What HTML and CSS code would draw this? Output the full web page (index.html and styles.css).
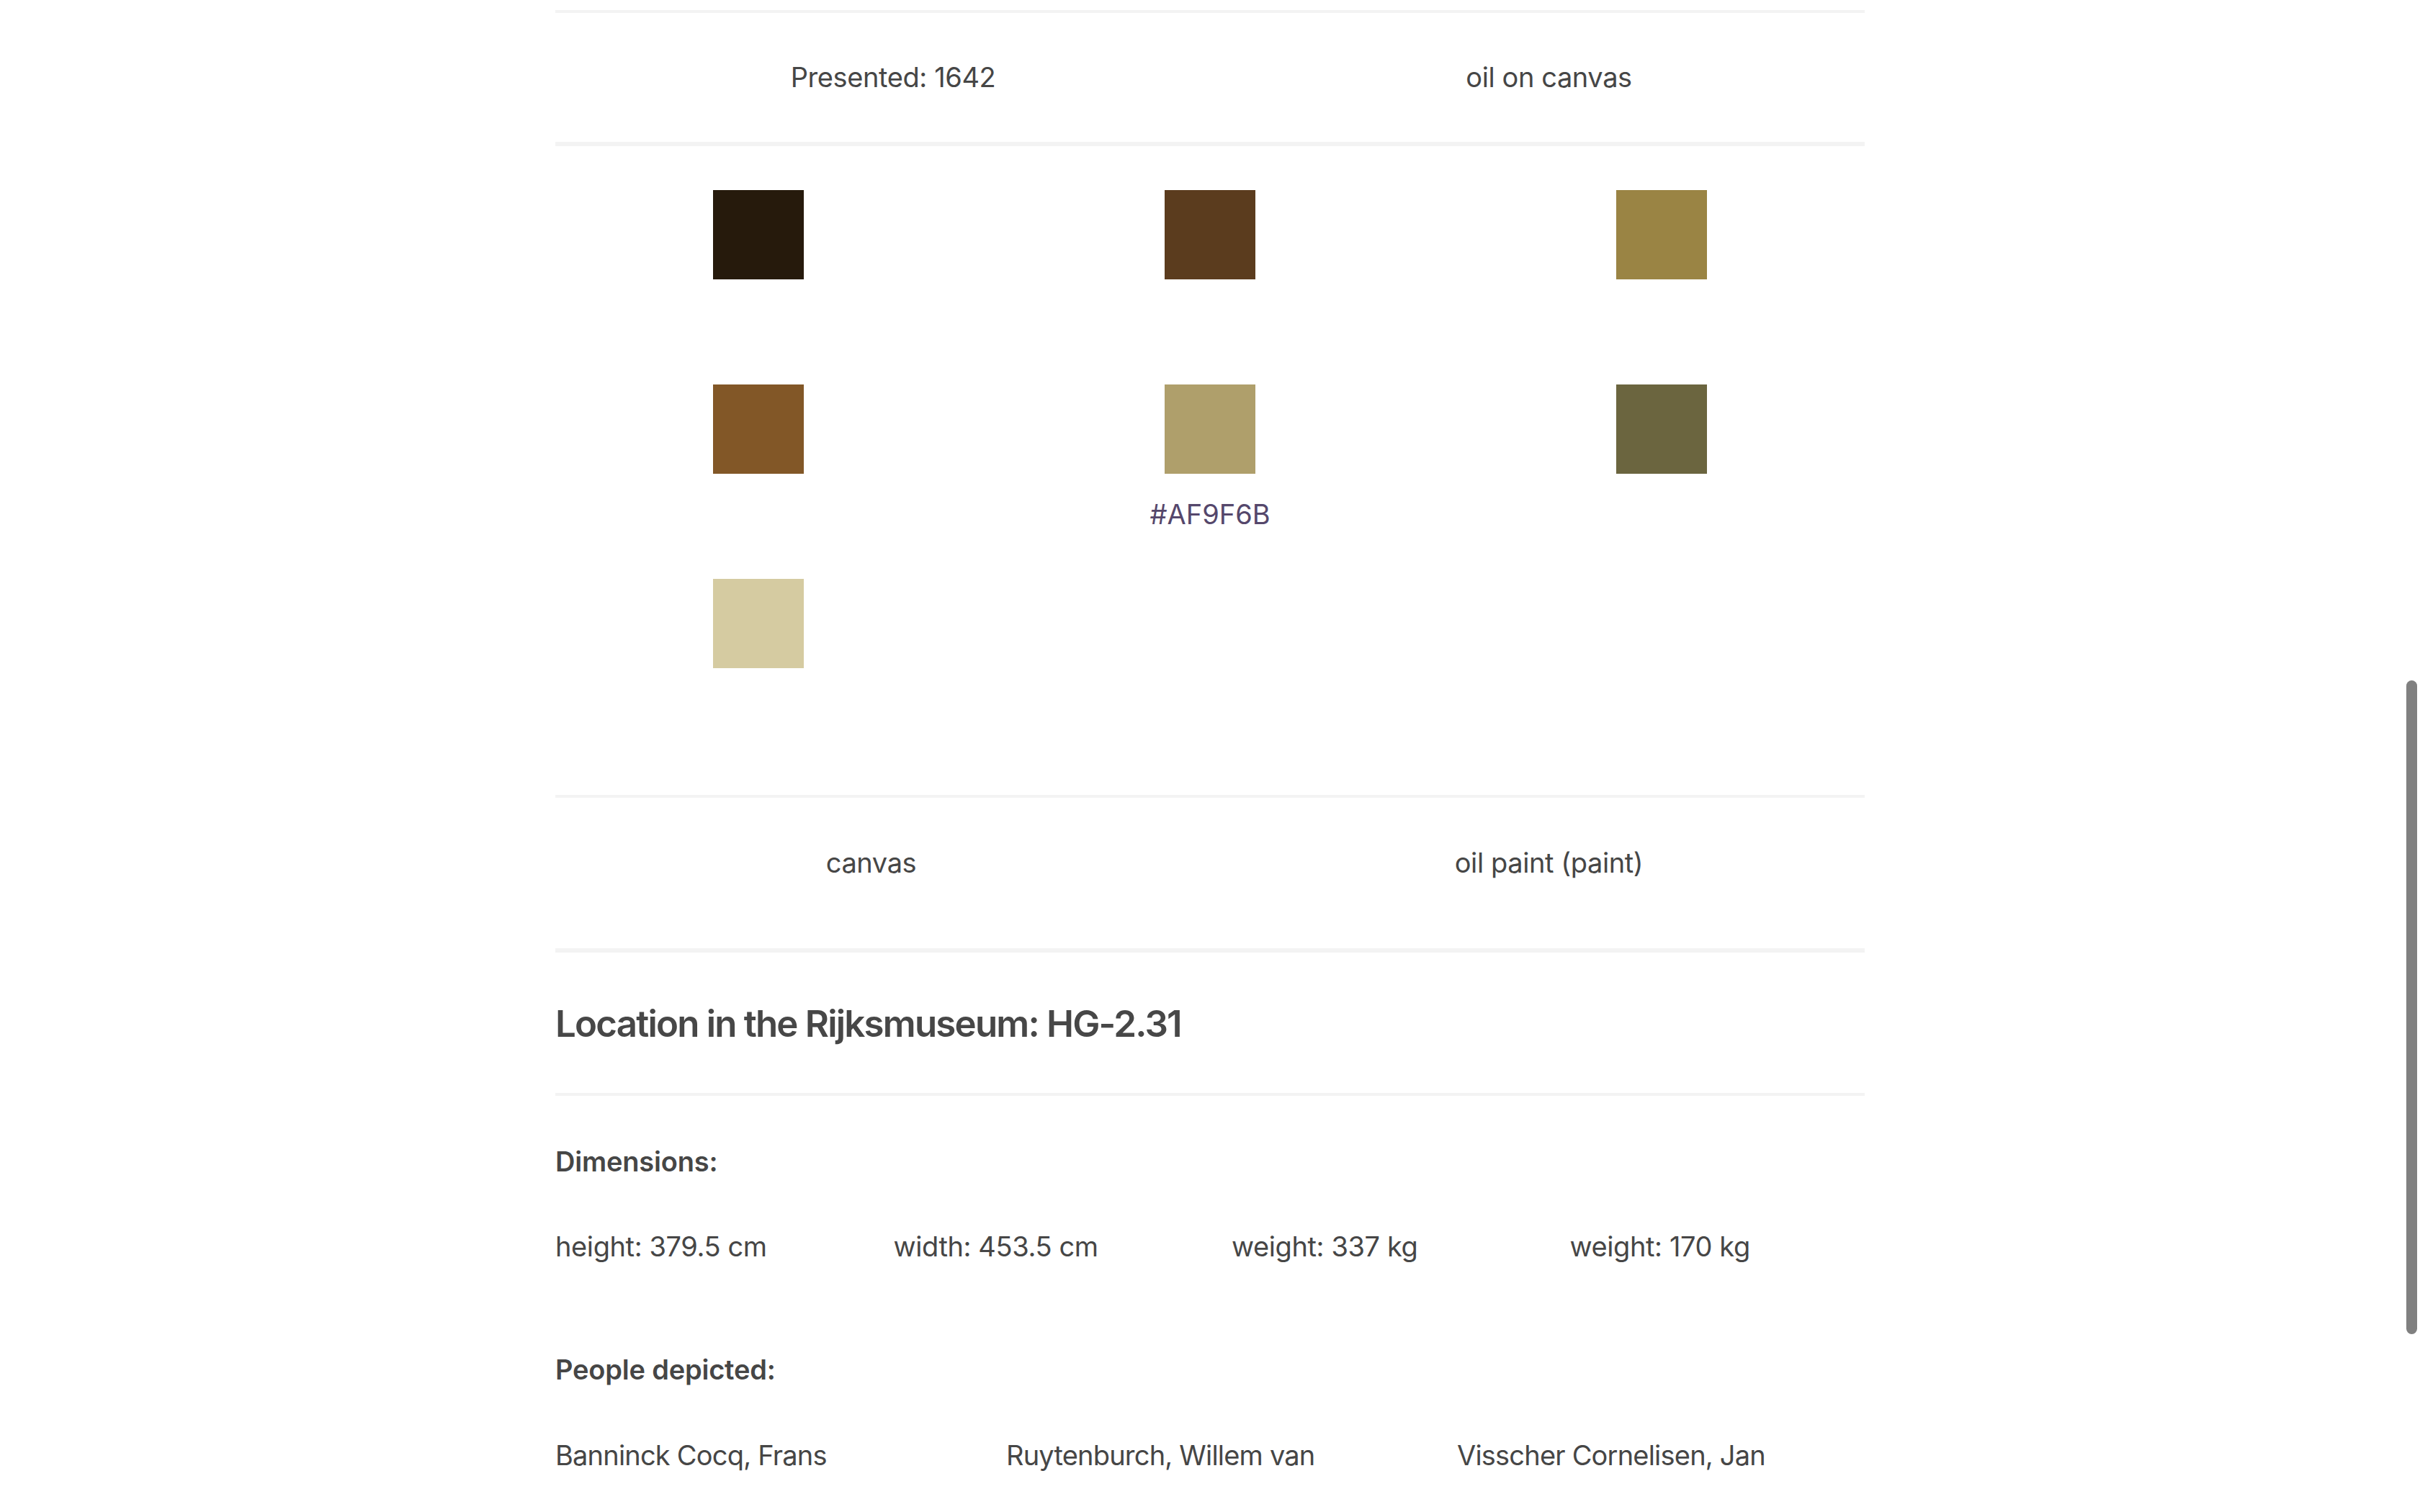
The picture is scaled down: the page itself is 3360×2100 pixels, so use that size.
FILE: index.html
```html
<!DOCTYPE html>
<html lang="en">
<head>
<meta charset="utf-8">
<title>Rijksmuseum object details</title>
<link rel="stylesheet" href="styles.css">
</head>
<body>
<main class="page">
  <div class="top-spacer"></div>

  <section class="pair-row pair-row--first">
    <div class="pair-cell pair-cell--shift">Presented: 1642</div>
    <div class="pair-cell">oil on canvas</div>
  </section>

  <section class="swatches">
    <div class="swatch-cell"><div class="swatch" style="background:#261A0C"></div><div class="hex"></div></div>
    <div class="swatch-cell"><div class="swatch" style="background:#5B3C1E"></div><div class="hex"></div></div>
    <div class="swatch-cell"><div class="swatch" style="background:#9A8444"></div><div class="hex"></div></div>
    <div class="swatch-cell"><div class="swatch" style="background:#825727"></div><div class="hex"></div></div>
    <div class="swatch-cell"><div class="swatch" style="background:#AF9F6B"></div><div class="hex">#AF9F6B</div></div>
    <div class="swatch-cell"><div class="swatch" style="background:#6B653F"></div><div class="hex"></div></div>
    <div class="swatch-cell"><div class="swatch" style="background:#D5CBA1"></div><div class="hex"></div></div>
  </section>

  <section class="pair-row pair-row--materials">
    <div class="pair-cell">canvas</div>
    <div class="pair-cell">oil paint (paint)</div>
  </section>

  <section class="location">
    <h2 class="location-title">Location in the Rijksmuseum: HG-2.31</h2>
  </section>

  <section class="details">
    <h3 class="detail-label">Dimensions:</h3>
    <div class="detail-grid detail-grid--four">
      <div class="detail-item">height: 379.5 cm</div>
      <div class="detail-item">width: 453.5 cm</div>
      <div class="detail-item">weight: 337 kg</div>
      <div class="detail-item">weight: 170 kg</div>
    </div>

    <h3 class="detail-label detail-label--people">People depicted:</h3>
    <div class="detail-grid detail-grid--three">
      <div class="detail-item detail-item--name">Banninck Cocq, Frans</div>
      <div class="detail-item detail-item--name">Ruytenburch, Willem van</div>
      <div class="detail-item detail-item--name">Visscher Cornelisen, Jan</div>
    </div>
  </section>
</main>
<div class="scroll-thumb"></div>
</body>
</html>
```

FILE: styles.css
```css
html, body {
  margin: 0;
  padding: 0;
  height: 2100px;
  overflow: hidden;
  background: #ffffff;
}

body {
  font-family: Inter, "Noto Sans", "Liberation Sans", sans-serif;
  color: #464646;
  font-size: 38px;
  line-height: 54px;
  letter-spacing: -0.4px;
}

.page {
  width: 1818px;
  margin: 0 auto;
}

.top-spacer {
  height: 14px;
}

.pair-row {
  display: grid;
  grid-template-columns: 1fr 1fr;
  column-gap: 64px;
  border-top: 4px solid #f3f3f3;
}

.pair-row--first {
  padding: 62px 0 63px;
  border-bottom: 6px solid #f3f3f3;
}

.pair-row--materials {
  padding: 63px 0 92px;
  border-bottom: 6px solid #f3f3f3;
}

.pair-cell {
  text-align: center;
}

.pair-cell--shift {
  padding-left: 61px;
}

.swatches {
  display: grid;
  grid-template-columns: repeat(3, 1fr);
  column-gap: 64px;
  row-gap: 63px;
  padding: 61px 0 93px;
}

.swatch-cell {
  display: flex;
  flex-direction: column;
  align-items: center;
}

.swatch {
  width: 126px;
  height: 124px;
}

.hex {
  margin-top: 29px;
  height: 54px;
  color: #55476b;
  text-align: center;
  letter-spacing: 0;
}

.location {
  padding: 68px 0 66px;
  border-bottom: 4px solid #f3f3f3;
}

.location-title {
  margin: 0;
  font-size: 51px;
  line-height: 61px;
  font-weight: 600;
  letter-spacing: -1.8px;
  color: #474747;
}

.details {
  padding-top: 64px;
}

.detail-label {
  margin: 0;
  font-size: 38px;
  line-height: 54px;
  font-weight: 600;
  letter-spacing: -0.2px;
}

.detail-label--people {
  margin-top: 117px;
}

.detail-grid {
  display: grid;
  column-gap: 60px;
  margin-top: 64px;
}

.detail-grid--four {
  grid-template-columns: repeat(4, 1fr);
}

.detail-grid--three {
  grid-template-columns: repeat(3, 1fr);
  margin-top: 65px;
}

.detail-item--name {
  letter-spacing: -0.8px;
}

.scroll-thumb {
  position: fixed;
  left: 3341px;
  top: 945px;
  width: 15px;
  height: 908px;
  border-radius: 8px;
  background: #808080;
}
```
